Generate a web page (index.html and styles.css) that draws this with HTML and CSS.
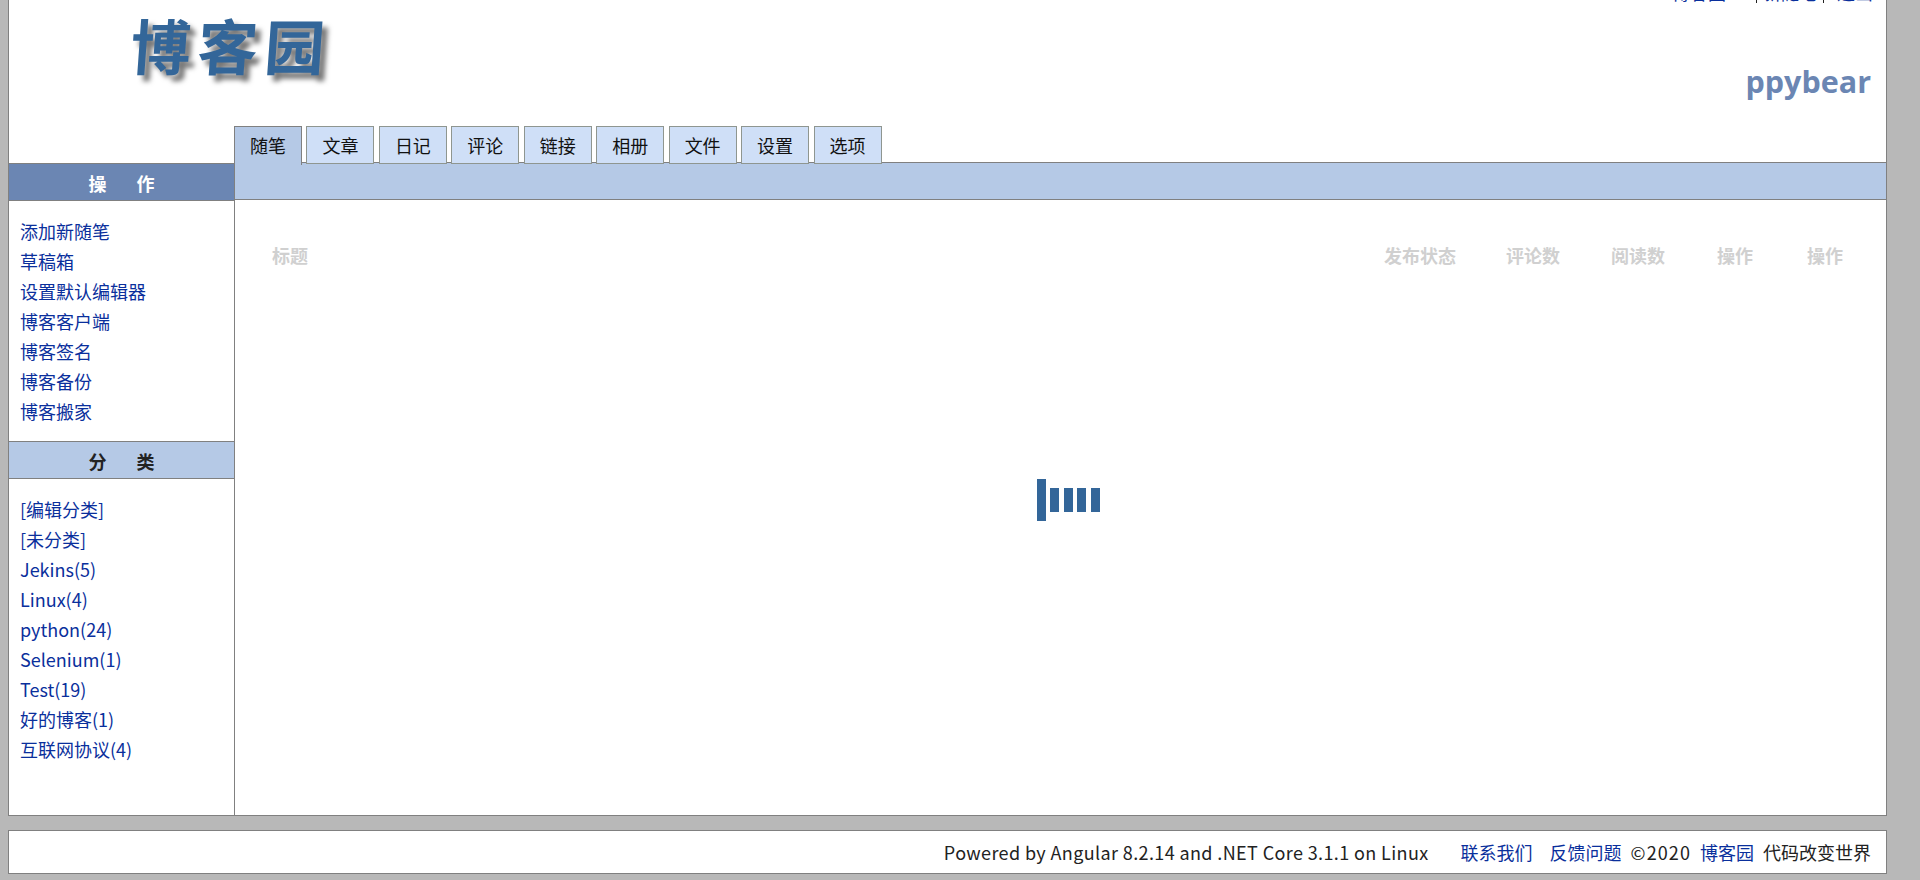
FILE: index.html
```html
<!DOCTYPE html>
<html lang="zh-CN">
<head>
  <meta charset="UTF-8" />
  <title>博客园 - 管理</title>
  <link rel="stylesheet" href="styles.css">
</head>
<body>
  <div class="page">
    <header class="top">
      <div class="top-links">
        <a class="link-home" href="#">博客园</a><span class="sep"></span><a href="#">新随笔</a><span class="sep"></span><a class="link-out" href="#">退出</a>
      </div>
      <div class="logo">博客园</div>
      <div class="username">ppybear</div>
      <nav class="tabs">
        <a class="tab active" href="#">随笔</a>
        <a class="tab" href="#">文章</a>
        <a class="tab" href="#">日记</a>
        <a class="tab" href="#">评论</a>
        <a class="tab" href="#">链接</a>
        <a class="tab" href="#">相册</a>
        <a class="tab" href="#">文件</a>
        <a class="tab" href="#">设置</a>
        <a class="tab" href="#">选项</a>
      </nav>
    </header>

    <div class="body-row">
      <aside class="sidebar">
        <h3 class="side-title dark">操 作</h3>
        <ul class="side-list">
          <li><a href="#">添加新随笔</a></li>
          <li><a href="#">草稿箱</a></li>
          <li><a href="#">设置默认编辑器</a></li>
          <li><a href="#">博客客户端</a></li>
          <li><a href="#">博客签名</a></li>
          <li><a href="#">博客备份</a></li>
          <li><a href="#">博客搬家</a></li>
        </ul>
        <h3 class="side-title light">分 类</h3>
        <ul class="side-list">
          <li><a href="#">[编辑分类]</a></li>
          <li><a href="#">[未分类]</a></li>
          <li><a href="#">Jekins(5)</a></li>
          <li><a href="#">Linux(4)</a></li>
          <li><a href="#">python(24)</a></li>
          <li><a href="#">Selenium(1)</a></li>
          <li><a href="#">Test(19)</a></li>
          <li><a href="#">好的博客(1)</a></li>
          <li><a href="#">互联网协议(4)</a></li>
        </ul>
      </aside>

      <main class="content">
        <div class="subbar"></div>
        <div class="table-head">
          <span class="col-title">标题</span>
          <span class="col-status">发布状态</span>
          <span class="col-comment">评论数</span>
          <span class="col-read">阅读数</span>
          <span class="col-op">操作</span>
          <span>操作</span>
        </div>
        <div class="loading">
          <span class="bar tall"></span>
          <span class="bar"></span>
          <span class="bar wide-gap"></span>
          <span class="bar"></span>
          <span class="bar wide-gap"></span>
        </div>
      </main>
    </div>

    <footer class="footer">
      <span class="powered">Powered by Angular 8.2.14 and .NET Core 3.1.1 on Linux</span>
      <a class="contact" href="#">联系我们</a>
      <a href="#">反馈问题</a>
      <span class="copy">©2020</span>
      <a href="#">博客园</a>
      <span>代码改变世界</span>
    </footer>
  </div>
</body>
</html>
```

FILE: styles.css
```css
:root {
  --border: #808080;
  --blue-dark: #6b86b3;
  --blue-mid: #b5c9e6;
  --blue-light: #cfdff7;
  --link: #0a2f9c;
}

* {
  box-sizing: border-box;
}

html, body {
  height: 100%;
}

body {
  margin: 0;
  background: #b8b8b8;
  color: #222;
  font-family: "Noto Sans CJK SC", "Open Sans", sans-serif;
  font-size: 18px;
  overflow: hidden;
}

a {
  color: var(--link);
  text-decoration: none;
}

.page {
  width: 1879px;
  margin-left: 8px;
}

.top {
  position: relative;
  height: 163px;
  background: #fff;
  border-left: 1px solid var(--border);
  border-right: 1px solid var(--border);
}

.top-links {
  position: absolute;
  top: -19px;
  right: 13px;
  display: flex;
  align-items: center;
  font-size: 18px;
  line-height: 22px;
}

.link-home {
  margin-right: 24px;
}

.link-out {
  margin-left: 7px;
}

.sep {
  width: 1px;
  height: 22px;
  margin: 0 6px;
  background: #222;
}

.logo {
  position: absolute;
  top: 2px;
  left: 122px;
  color: #336699;
  font-size: 60px;
  font-weight: 700;
  line-height: 84px;
  letter-spacing: 7px;
  white-space: nowrap;
  text-shadow: 6px 6px 5px #777;
  transform: skewX(-4deg);
}

.username {
  position: absolute;
  top: 61px;
  right: 15px;
  color: var(--blue-dark);
  font-family: "Open Sans", sans-serif;
  font-size: 30.5px;
  font-weight: 700;
  line-height: 40px;
}

.tabs {
  position: absolute;
  left: 225px;
  top: 126px;
  z-index: 2;
  display: flex;
  align-items: flex-start;
  gap: 4.45px;
}

.tab {
  display: block;
  width: 68px;
  height: 38px;
  border: 1px solid #8f9690;
  background: var(--blue-light);
  color: #111;
  font-size: 18px;
  line-height: 36px;
  text-align: center;
}

.tab.active {
  height: 39px;
  border-color: var(--border);
  border-bottom: 0;
  background: var(--blue-mid);
}

.body-row {
  display: flex;
  height: 653px;
  background: #fff;
  border: 1px solid var(--border);
  border-top: 0;
}

.sidebar {
  width: 226px;
  flex: none;
  border-right: 1px solid var(--border);
}

.side-title {
  height: 38px;
  margin: 0;
  border-top: 1px solid var(--border);
  border-bottom: 1px solid var(--border);
  font-size: 18px;
  font-weight: 700;
  line-height: 38px;
  text-align: center;
  word-spacing: 26px;
}

.side-title.dark {
  background: var(--blue-dark);
  color: #fff;
}

.side-title.light {
  background: var(--blue-mid);
  color: #222;
}

.side-list {
  margin: 0;
  padding: 15px 0 15px 11px;
  list-style: none;
  line-height: 30px;
}

.content {
  flex: 1;
  position: relative;
  min-width: 0;
  margin-top: -1px;
}

.subbar {
  height: 38px;
  background: var(--blue-mid);
  border-top: 1px solid var(--border);
  border-bottom: 1px solid var(--border);
}

.table-head {
  display: flex;
  padding: 43px 0 0 37px;
  color: #d0d0d0;
  font-size: 18px;
  font-weight: 700;
  line-height: 24px;
}

.col-title {
  width: 1112px;
}

.col-status {
  width: 122px;
}

.col-comment {
  width: 105px;
}

.col-read {
  width: 106px;
}

.col-op {
  width: 90px;
}

.loading {
  position: absolute;
  top: 317px;
  left: 802px;
  display: flex;
  align-items: center;
  height: 42px;
}

.bar {
  width: 9px;
  height: 24px;
  margin-left: 4px;
  background: #336699;
}

.bar.tall {
  height: 42px;
  margin-left: 0;
}

.bar.wide-gap {
  margin-left: 5px;
}

.footer {
  display: flex;
  justify-content: flex-end;
  align-items: center;
  gap: 9px;
  height: 44px;
  margin-top: 14px;
  padding-right: 15px;
  background: #fff;
  border: 1px solid var(--border);
  font-size: 18px;
  white-space: nowrap;
}

.powered {
  margin-right: 23px;
  letter-spacing: 0.38px;
}

.contact {
  margin-right: 8px;
}

.copy {
  letter-spacing: 1.1px;
}
```
